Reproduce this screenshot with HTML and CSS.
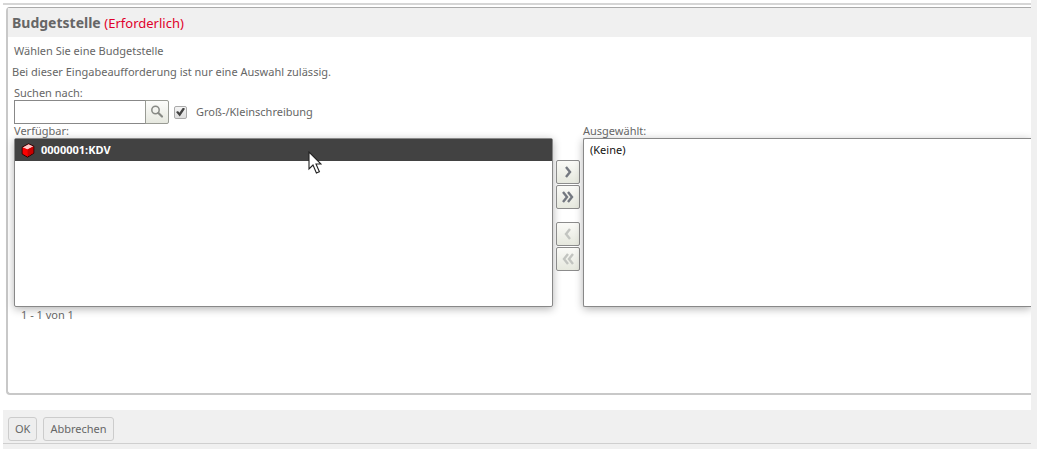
FILE: index.html
```html
<!DOCTYPE html>
<html lang="de">
<head>
  <meta charset="UTF-8">
  <meta name="viewport" content="width=device-width, initial-scale=1">
  <title>Budgetstelle</title>
  <link rel="stylesheet" href="styles.css">
</head>
<body>
  <div class="dialog">
    <form class="content">
      <section class="panel">
        <h1 class="panel-title">Budgetstelle <span class="required">(Erforderlich)</span></h1>
        <div class="panel-body">
          <p class="intro">Wählen Sie eine Budgetstelle</p>
          <p class="hint">Bei dieser Eingabeaufforderung ist nur eine Auswahl zulässig.</p>

          <label class="label" for="suche">Suchen nach:</label>
          <div class="search">
            <input class="search-text" type="text" id="suche">
            <button class="search-btn" type="button" aria-label="Suchen">
              <svg width="14" height="14" viewBox="0 0 14 14" fill="none" stroke="#888a85">
                <circle cx="5.5" cy="5" r="3.7" stroke-width="1.5"/>
                <path d="M8.4 8L12 11.5" stroke-width="2.2" stroke-linecap="round"/>
              </svg>
            </button>
            <input class="check" type="checkbox" id="schreibung" checked>
            <label for="schreibung">Groß-/Kleinschreibung</label>
          </div>

          <div class="lists">
            <div class="available">
              <div class="list-label" id="verfuegbar">Verfügbar:</div>
              <ul class="list" role="listbox" aria-labelledby="verfuegbar">
                <li class="item selected" role="option" aria-selected="true">
                  <svg width="14" height="15" viewBox="0 0 14 15">
                    <path d="M7.5 .8L12.8 3.2V10.2L6.5 14.2L1.2 11V4.2Z" fill="#e00000" stroke="#200" stroke-width="1"/>
                    <path d="M7.5 1.3L12.3 3.4L6.5 6.6L1.7 4.4Z" fill="#ffc8c8"/>
                    <path d="M6.5 6.6L12.3 3.5V10L6.5 13.6Z" fill="#c80000"/>
                    <path d="M1.7 4.5L6.5 6.6V13.6L1.7 10.7Z" fill="#fa0000"/>
                  </svg>
                  <span>0000001:KDV</span>
                  <svg class="pointer" width="14" height="24" viewBox="0 0 14 24">
                    <path d="M1 1V18L5 14L8.4 22L11.4 20.7L8 13H13Z" fill="#fff" stroke="#222" stroke-width="1.1"/>
                  </svg>
                </li>
              </ul>
              <div class="count">1 - 1 von 1</div>
            </div>

            <div class="moves">
              <button class="move" type="button" aria-label="Hinzufügen">
                <svg width="14" height="14" viewBox="0 0 14 14"><path d="M5 2L9 7L5 12"/></svg>
              </button>
              <button class="move" type="button" aria-label="Alle hinzufügen">
                <svg width="14" height="14" viewBox="0 0 14 14"><path d="M2 2L6 7L2 12M7 2L11 7L7 12"/></svg>
              </button>
              <button class="move back" type="button" aria-label="Entfernen" disabled>
                <svg width="14" height="14" viewBox="0 0 14 14"><path d="M9 2L5 7L9 12"/></svg>
              </button>
              <button class="move" type="button" aria-label="Alle entfernen" disabled>
                <svg width="14" height="14" viewBox="0 0 14 14"><path d="M7 2L3 7L7 12M12 2L8 7L12 12"/></svg>
              </button>
            </div>

            <div class="chosen">
              <div class="list-label" id="ausgewaehlt">Ausgewählt:</div>
              <ul class="list" role="listbox" aria-labelledby="ausgewaehlt">
                <li class="item" role="option" aria-selected="false">(Keine)</li>
              </ul>
            </div>
          </div>
        </div>
      </section>
    </form>
    <footer class="footer">
      <button class="btn" type="button">OK</button>
      <button class="btn" type="button">Abbrechen</button>
    </footer>
  </div>
</body>
</html>
```
FILE: styles.css
```css
* {
  box-sizing: border-box;
}
body {
  margin: 0;
  background: #fff;
  color: #666;
  font-family: "Noto Sans", sans-serif;
  font-size: 11px;
  line-height: 16px;
}
h1, p, ul {
  margin: 0;
  padding: 0;
}
button, input {
  margin: 0;
  font: inherit;
  color: inherit;
}
svg {
  display: block;
}
.dialog {
  padding-left: 3px;
  border-right: 6px solid #f0f0f0;
}
.content {
  padding: 3px 0 15px;
  overflow: hidden;
}
.content::before {
  content: "";
  display: block;
  height: 2px;
  margin-bottom: 2px;
  background: #d6d6d6;
}
.panel {
  margin-left: 3px;
  min-height: 388px;
  border: 2px solid #c8c8c8;
  border-top: 1px solid #aaa;
  border-right: 0;
  border-radius: 4px 0 0 4px;
}
.panel-title {
  padding: 5px 4px 4px;
  background: #f0f0f0;
  font-size: 14px;
  line-height: 20px;
}
.required {
  color: #e0002b;
  font-size: 13px;
  font-weight: normal;
}
.panel-body {
  padding: 6px 0 0 6px;
}
.hint {
  margin: 5px 0 5px -2px;
}
.label {
  display: block;
}
.search {
  display: flex;
  align-items: center;
  height: 24px;
  margin-top: -1px;
}
.search-text {
  width: 132px;
  height: 24px;
  border: 1px solid #888;
  background: #fff;
}
.search-btn {
  display: flex;
  align-items: center;
  justify-content: center;
  width: 24px;
  height: 24px;
  margin-left: -1px;
  padding: 0;
  border: 1px solid #999b94;
  border-radius: 0 2px 2px 0;
  background: linear-gradient(#fcfcfa, #e6e8df);
}
.check {
  appearance: none;
  width: 13px;
  height: 13px;
  margin: 0 9px 0 5px;
  border: 1px solid #aaa;
  border-radius: 2px;
  background: linear-gradient(#f4f4f4, #ddd);
}
.check:checked::before {
  content: "";
  display: block;
  width: 9px;
  height: 9px;
  margin: 1px;
  background: #444;
  clip-path: polygon(0 50%, 22% 38%, 38% 58%, 78% 0, 100% 14%, 42% 100%);
}
.lists {
  display: flex;
}
.available {
  width: 53%;
}
.chosen {
  flex: 1;
}
.list-label {
  line-height: 14px;
}
.list {
  height: 169px;
  border: 1px solid #888;
  border-radius: 2px;
  background: #fff;
  box-shadow: 0 2px 8px rgba(0, 0, 0, 0.3);
  list-style: none;
}
.chosen .list {
  border-right: 0;
  border-radius: 2px 0 0 2px;
}
.item {
  display: flex;
  align-items: center;
  gap: 6px;
  position: relative;
  height: 22px;
  padding: 0 6px;
  color: #111;
}
.selected {
  background: #424242;
  color: #fff;
  font-weight: bold;
}
.pointer {
  position: absolute;
  left: 293px;
  top: 12px;
}
.count {
  padding-left: 7px;
}
.moves {
  display: flex;
  flex-direction: column;
  gap: 1px;
  padding: 36px 3px 0;
}
.move {
  display: flex;
  align-items: center;
  justify-content: center;
  width: 24px;
  height: 24px;
  padding: 0;
  border: 1px solid #8c8c8c;
  border-radius: 2px;
  background: linear-gradient(#fafaf7, #e6e8de);
}
.move svg {
  fill: none;
  stroke: #747880;
  stroke-width: 2.4;
}
.move:disabled svg {
  stroke: #c2c4c0;
}
.back {
  margin-top: 12px;
}
.footer {
  display: flex;
  gap: 6px;
  height: 39px;
  padding: 7px 5px;
  background: linear-gradient(#cfcfcf, #cfcfcf) 0 33px / 100% 1px no-repeat #f0f0f0;
}
.btn {
  height: 24px;
  padding: 0 6px;
  border: 1px solid #ccc;
  border-radius: 3px;
  background: #eee;
}
```
